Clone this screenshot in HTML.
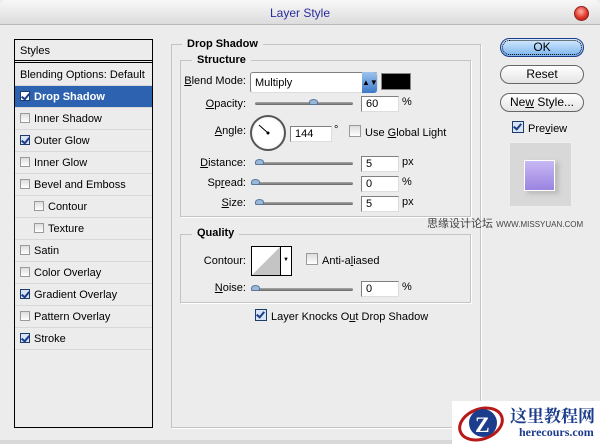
<!DOCTYPE html>
<html><head><meta charset="utf-8"><style>
*{margin:0;padding:0;box-sizing:border-box}
body{width:600px;height:444px;overflow:hidden;background:#ececec;font-family:"Liberation Sans",Tahoma,sans-serif;font-size:11px;color:#000;position:relative}
.a{position:absolute}
.title{left:0;top:0;width:600px;height:25px;background:linear-gradient(#f8f8f8,#dcdcdc);border-bottom:1px solid #b8b8b8;border-radius:6px 6px 0 0;text-align:center;line-height:26px;color:#2b2ba0;font-size:12px}
.close{left:574px;top:6px;width:15px;height:15px;border-radius:50%;background:radial-gradient(circle at 45% 35%,#ffb0a8,#e03828 55%,#a01810);border:1px solid #902020}
.list{left:14px;top:39px;width:139px;height:389px;border:1px solid #000;background:#ececec}
.row{position:absolute;left:0;width:137px;height:22px;line-height:22px;padding-left:5px;border-bottom:1px solid #d8d8d8}
.cb{display:inline-block;width:10px;height:10px;border:1px solid #9a9a9a;background:linear-gradient(#ddd,#fff);vertical-align:-1px;margin-right:4px;position:relative}
.cb.on{border-color:#1c3c6c;background:#d8e4f4}
.cb.on:after{content:"";position:absolute;left:2px;top:0px;width:3px;height:6px;border:solid #1c3c8c;border-width:0 2px 2px 0;transform:rotate(40deg)}
.sel{background:#2d62b0;color:#fff;font-weight:bold}
.grp{border:1px solid #c4c4c4;box-shadow:1px 1px 0 #fff}
.lg{background:#ececec;font-weight:bold;padding:0 5px}
.lbl{text-align:right;width:70px}
.lbl u{text-decoration:underline}
.box{background:#fff;border:1px solid #808080;border-right-color:#ddd;border-bottom-color:#ddd;height:16px;line-height:15px;padding-left:4px}
.sl{height:3px;background:linear-gradient(#aaa,#666);border-radius:2px}
.th{width:9px;height:6px;background:#9ab8d8;border-radius:50% 50% 2px 2px;border:1px solid #5878a0}
.btn{left:500px;width:84px;height:19px;border:1px solid #666;border-radius:10px;background:linear-gradient(#fff,#e4e4e4);text-align:center;line-height:17px;font-size:12px}
</style></head><body>
<div class="a title">Layer Style</div>
<div class="a close"></div>

<div class="a list">
 <div class="row" style="top:0;height:23px;border-bottom:3px double #000">Styles</div>
 <div class="row" style="top:24px">Blending Options: Default</div>
 <div class="row sel" style="top:46px"><span class="cb on" style="background:#fff"></span>Drop Shadow</div>
 <div class="row" style="top:68px"><span class="cb"></span>Inner Shadow</div>
 <div class="row" style="top:90px"><span class="cb on"></span>Outer Glow</div>
 <div class="row" style="top:112px"><span class="cb"></span>Inner Glow</div>
 <div class="row" style="top:134px"><span class="cb"></span>Bevel and Emboss</div>
 <div class="row" style="top:156px;padding-left:19px"><span class="cb"></span>Contour</div>
 <div class="row" style="top:178px;padding-left:19px"><span class="cb"></span>Texture</div>
 <div class="row" style="top:200px"><span class="cb"></span>Satin</div>
 <div class="row" style="top:222px"><span class="cb"></span>Color Overlay</div>
 <div class="row" style="top:244px"><span class="cb on"></span>Gradient Overlay</div>
 <div class="row" style="top:266px"><span class="cb"></span>Pattern Overlay</div>
 <div class="row" style="top:288px"><span class="cb on"></span>Stroke</div>
</div>

<div class="a grp" style="left:171px;top:44px;width:310px;height:384px"></div>
<div class="a lg" style="left:182px;top:38px">Drop Shadow</div>
<div class="a grp" style="left:180px;top:60px;width:291px;height:157px"></div>
<div class="a lg" style="left:192px;top:54px">Structure</div>

<div class="a lbl" style="left:176px;top:75px"><u>B</u>lend Mode:</div>
<div class="a box" style="left:250px;top:72px;width:128px;height:21px;line-height:20px;border-radius:3px">Multiply</div>
<div class="a" style="left:362px;top:72px;width:15px;height:21px;background:linear-gradient(#9cc4ee,#3c78c8);border-radius:0 3px 3px 0;color:#000;font-size:8px;text-align:center;line-height:21px">&#9650;&#9660;</div>
<div class="a" style="left:381px;top:73px;width:30px;height:17px;background:#000;border:1px solid #888"></div>

<div class="a lbl" style="left:176px;top:98px"><u>O</u>pacity:</div>
<div class="a sl" style="left:255px;top:102px;width:98px"></div>
<div class="a th" style="left:309px;top:99px"></div>
<div class="a box" style="left:361px;top:96px;width:38px">60</div>
<div class="a" style="left:402px;top:96px">%</div>

<div class="a lbl" style="left:176px;top:125px"><u>A</u>ngle:</div>
<div class="a" style="left:250px;top:115px;width:36px;height:36px;border-radius:50%;border:2px solid #555;background:radial-gradient(#fff 60%,#ddd)"></div>
<svg class="a" style="left:250px;top:115px" width="36" height="36"><line x1="9" y1="10" x2="18" y2="18" stroke="#000" stroke-width="1"/><circle cx="18" cy="18" r="1.5"/></svg>
<div class="a box" style="left:290px;top:126px;width:42px">144</div>
<div class="a" style="left:334px;top:124px">°</div>
<div class="a" style="left:349px;top:125px"><span class="cb" style="width:12px;height:12px"></span>Use <u>G</u>lobal Light</div>

<div class="a lbl" style="left:176px;top:157px"><u>D</u>istance:</div>
<div class="a sl" style="left:255px;top:162px;width:98px"></div>
<div class="a th" style="left:255px;top:159px"></div>
<div class="a box" style="left:361px;top:156px;width:38px">5</div>
<div class="a" style="left:402px;top:156px">px</div>

<div class="a lbl" style="left:176px;top:177px">Sp<u>r</u>ead:</div>
<div class="a sl" style="left:251px;top:182px;width:102px"></div>
<div class="a th" style="left:251px;top:179px"></div>
<div class="a box" style="left:361px;top:176px;width:38px">0</div>
<div class="a" style="left:402px;top:176px">%</div>

<div class="a lbl" style="left:176px;top:197px"><u>S</u>ize:</div>
<div class="a sl" style="left:255px;top:202px;width:98px"></div>
<div class="a th" style="left:255px;top:199px"></div>
<div class="a box" style="left:361px;top:196px;width:38px">5</div>
<div class="a" style="left:402px;top:196px">px</div>

<div class="a" style="left:427px;top:215px;color:#444;font-size:11px;font-family:'Liberation Sans','Noto Sans CJK SC',sans-serif">思缘设计论坛 <span style="font-size:8px">WWW.MISSYUAN.COM</span></div>

<div class="a grp" style="left:180px;top:234px;width:291px;height:69px"></div>
<div class="a lg" style="left:192px;top:227px">Quality</div>
<div class="a lbl" style="left:176px;top:255px">Contour:</div>
<div class="a" style="left:251px;top:246px;width:41px;height:30px;border:1px solid #000;background:#fff"></div>
<svg class="a" style="left:252px;top:247px" width="28" height="28"><polygon points="0,28 28,0 28,28" fill="#c4c4c4"/></svg>
<div class="a" style="left:280px;top:247px;width:11px;height:28px;border-left:1px solid #000;background:#fff;font-size:6px;text-align:center;line-height:26px">&#9660;</div>
<div class="a" style="left:306px;top:253px"><span class="cb" style="width:12px;height:12px"></span>Anti-a<u>l</u>iased</div>
<div class="a lbl" style="left:176px;top:282px"><u>N</u>oise:</div>
<div class="a sl" style="left:251px;top:288px;width:102px"></div>
<div class="a th" style="left:251px;top:285px"></div>
<div class="a box" style="left:361px;top:281px;width:38px">0</div>
<div class="a" style="left:402px;top:281px">%</div>

<div class="a" style="left:255px;top:309px"><span class="cb on" style="width:12px;height:12px"></span>Layer Knocks O<u>u</u>t Drop Shadow</div>

<div class="a btn" style="top:38px;background:linear-gradient(#d8ecff,#7ab4ee);border-color:#1c3c8c;outline:1px dotted #000;outline-offset:-3px">OK</div>
<div class="a btn" style="top:65px">Reset</div>
<div class="a btn" style="top:93px">Ne<u>w</u> Style...</div>
<div class="a" style="left:512px;top:121px"><span class="cb on" style="width:12px;height:12px"></span>Pre<u>v</u>iew</div>
<div class="a" style="left:509px;top:142px;width:63px;height:65px;background:#d8d8d8;border:1px solid #eee"></div>
<div class="a" style="left:527px;top:162px;width:32px;height:32px;background:#bbb;filter:blur(2px)"></div>
<div class="a" style="left:524px;top:160px;width:31px;height:31px;border:1px solid #fff;background:linear-gradient(#c8b8f4,#9a84e0)"></div>

<div class="a" style="left:0;top:440px;width:600px;height:4px;background:#d8d8d8"></div>
<div class="a" style="left:452px;top:401px;width:148px;height:43px;background:#fff"></div>
<svg class="a" style="left:455px;top:402px" width="50" height="42"><ellipse cx="26" cy="22" rx="22" ry="15" fill="none" stroke="#b81818" stroke-width="3" transform="rotate(-20 26 22)"/><circle cx="28" cy="21" r="14" fill="#1c3c8c"/><text x="20" y="30" font-size="22" font-weight="bold" fill="#fff" font-family="Liberation Serif">Z</text></svg>
<div class="a" style="left:510px;top:402px;color:#1c3c8c;font-size:17px;font-weight:bold;font-family:'Liberation Serif','Noto Serif CJK SC',serif">这里教程网</div>
<div class="a" style="left:519px;top:425px;color:#1c3c8c;font-size:12px;font-weight:bold;font-family:'Liberation Serif',serif">herecours.com</div>
</body></html>
